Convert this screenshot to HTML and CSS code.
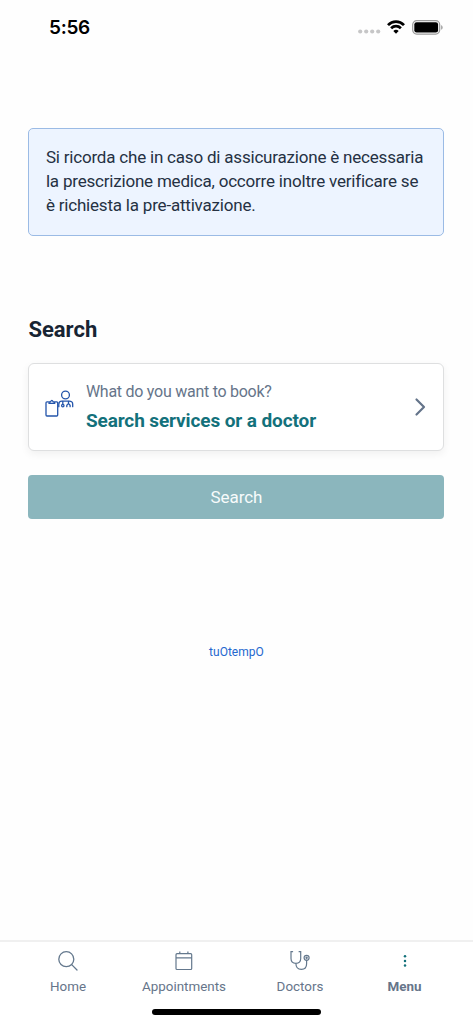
FILE: index.html
```html
<!DOCTYPE html>
<html lang="en">
<head>
<meta charset="utf-8">
<meta name="viewport" content="width=device-width, initial-scale=1">
<title>Search</title>
<link rel="stylesheet" href="styles.css">
</head>
<body>
<div class="app">
  <header class="status">
    <span class="clock">5:56</span>
    <div class="indicators">
      <svg class="signal" width="23" height="5" viewBox="0 0 23 5" fill="#c6c6c7"><circle cx="2.2" cy="2.5" r="2.1"/><circle cx="8.2" cy="2.5" r="2.1"/><circle cx="14.2" cy="2.5" r="2.1"/><circle cx="20.2" cy="2.5" r="2.1"/></svg>
      <svg class="wifi" width="18" height="14" viewBox="0 0 18 14" fill="none" stroke="#000" stroke-width="2.7"><path d="M1 5.2C5.5.4 12.500.4 17 5.200"/><path d="M4.100 8.300C6.900 5.500 11.100 5.500 13.900 8.300"/><path d="M9 13.700 6.300 11Q9 8.600 11.700 11Z" fill="#000" stroke="none"/></svg>
      <svg class="battery" width="31" height="15" viewBox="0 0 31 15"><rect x=".7" y=".7" width="27" height="13.400" rx="4" fill="none" stroke="#9b9b9b" stroke-width="1.200"/><rect x="2.300" y="2.300" width="23.800" height="10.200" rx="2.300"/><path d="M29.200 5v4.800q1.400-.7 1.400-2.400T29.200 5Z" fill="#999"/></svg>
    </div>
  </header>
  <main class="content">
    <p class="notice">Si ricorda che in caso di assicurazione è necessaria<br>la prescrizione medica, occorre inoltre verificare se<br>è richiesta la pre-attivazione.</p>
    <h1 class="title">Search</h1>
    <div class="picker">
      <svg class="booking" width="30" height="28" viewBox="0 0 30 28" fill="none" stroke="#2455ab" stroke-width="1.300" stroke-linejoin="round" stroke-linecap="round"><circle cx="20.500" cy="5" r="3.900"/><path d="M3.200 11.800H2Q1 11.800 1 12.800V25Q1 26 2 26H11.700Q12.700 26 12.700 25V12.800Q12.700 11.800 11.700 11.800H10.500"/><path d="M4 11.800V13.400H9.700V11.800H8.100Q6.900 9 5.600 11.800Z"/><path d="M13.800 16.700V14.200Q13.800 11.200 16.900 11.200H24.100Q27.700 11.200 27.700 14.200V16.700"/><path d="M17.800 11.400V14.300M23.500 11.400V13.600"/><circle cx="17.800" cy="15.600" r="1.200"/><path d="M21.800 16.700V15.400Q23.500 12.200 25.100 15.400V16.700"/></svg>
      <div class="picker-text"><span class="question">What do you want to book?</span><strong class="answer">Search services or a doctor</strong></div>
      <svg class="chevron" width="12" height="20" viewBox="0 0 12 20" fill="none" stroke="#64748a" stroke-width="2.200" stroke-linecap="round" stroke-linejoin="round"><path d="M2.500 2.500 10 10 2.500 17.500"/></svg>
    </div>
    <button class="submit">Search</button>
    <a class="brand">tuOtempO</a>
  </main>
  <footer class="footer">
    <nav class="tabs">
      <a class="tab"><svg width="22" height="22" viewBox="0 0 22 22" fill="none" stroke="#64788d" stroke-width="1.300" stroke-linecap="round"><circle cx="9.300" cy="9.200" r="7.500"/><path d="M14.700 14.600 20 20"/></svg><span>Home</span></a>
      <a class="tab"><svg width="22" height="22" viewBox="0 0 22 22" fill="none" stroke="#64788d" stroke-width="1.200"><rect x="3" y="3.700" width="15.700" height="15.800" rx="1"/><path d="M3 7.800H18.700M6.800 1.500V4M14.900 1.500V4"/></svg><span>Appointments</span></a>
      <a class="tab"><svg width="22" height="22" viewBox="0 0 22 22" fill="none" stroke="#64788d" stroke-width="1.200" stroke-linecap="round"><path d="M3.600 1.700H2V8.500C2 11.500 4 13.300 6.900 13.300S11.700 11.500 11.700 8.500V1.700H10.100M6.900 13.300C6.900 17 9 19.400 12.400 19.400S17.600 17 17.600 13.800V10.200"/><circle cx="17.600" cy="7.800" r="2.500"/><circle cx="17.600" cy="7.800" r=".6"/></svg><span>Doctors</span></a>
      <a class="tab active"><svg width="22" height="22" viewBox="0 0 22 22" fill="#13717b"><circle cx="11" cy="6.300" r="1.250"/><circle cx="11" cy="10.900" r="1.250"/><circle cx="11" cy="15.500" r="1.250"/></svg><span>Menu</span></a>
    </nav>
    <div class="home-indicator"></div>
  </footer>
</div>
</body>
</html>
```
FILE: styles.css
```css
* { box-sizing: border-box; }
body { margin: 0; background: #fefefe; font-family: Roboto, "Liberation Sans", sans-serif; }
.app { display: flex; flex-direction: column; height: 1024px; overflow: hidden; }
svg { display: block; flex: none; }
.status { display: flex; justify-content: space-between; align-items: flex-start; height: 127px; padding: 15px 30.500px 0 49px; }
.clock { font: 600 19px/26px Inter, sans-serif; letter-spacing: -.3px; }
.indicators { display: flex; align-items: flex-start; }
.signal { margin-top: 14px; }
.wifi { margin: 5px 0 0 6px; }
.battery { margin: 4.500px 0 0 7px; }
.content { display: flex; flex: 1; flex-direction: column; padding: 0 28.600px 0 28.400px; }
.notice { height: 108.500px; margin: .5px 0 0; padding: 16.500px; border: 1px solid #9bbbe5; border-radius: 5px; background: #edf4ff; color: #253143; font-size: 17px; line-height: 24.200px; letter-spacing: -.2px; white-space: nowrap; }
.title { margin: 79px 0 0; color: #172433; font-size: 22px; line-height: 30px; font-weight: 700; }
.picker { display: flex; align-items: center; height: 88px; margin-top: 18px; padding: 0 17px 0 16px; border: 1px solid #dedfe0; border-radius: 6px; background: #fff; box-shadow: 0 3px 9px rgba(0,0,0,.06); }
.booking { margin-top: -6px; }
.picker-text { display: flex; flex: 1; flex-direction: column; margin-left: 10.500px; white-space: nowrap; }
.question { color: #66758a; font-size: 16px; line-height: 27px; letter-spacing: -.26px; }
.answer { color: #13717b; font-size: 19px; line-height: 32px; font-weight: 700; letter-spacing: -.11px; }
.chevron { margin-top: -1px; }
.submit { height: 44px; margin-top: 24px; padding: 0; border: 0; border-radius: 4px; background: #8bb6bd; color: #f7fbfb; font: 17px/44px Roboto, sans-serif; letter-spacing: -.1px; }
.brand { align-self: center; margin-top: 123px; color: #2468cf; font-size: 12px; line-height: 20px; }
.footer { height: 84px; border-top: 2px solid #f0f0f0; background: #fff; }
.tabs { display: grid; grid-template-columns: 126px 106px 126px 83px; height: 56px; padding: 8px 0 0 5px; }
.tab { display: flex; flex-direction: column; align-items: center; color: #66758a; font-size: 13.400px; line-height: 18px; }
.tab span { margin-top: 6px; }
.active { font-weight: 700; }
.home-indicator { width: 169px; height: 6px; margin: 11px auto 0; border-radius: 3px; background: #000; }
```
